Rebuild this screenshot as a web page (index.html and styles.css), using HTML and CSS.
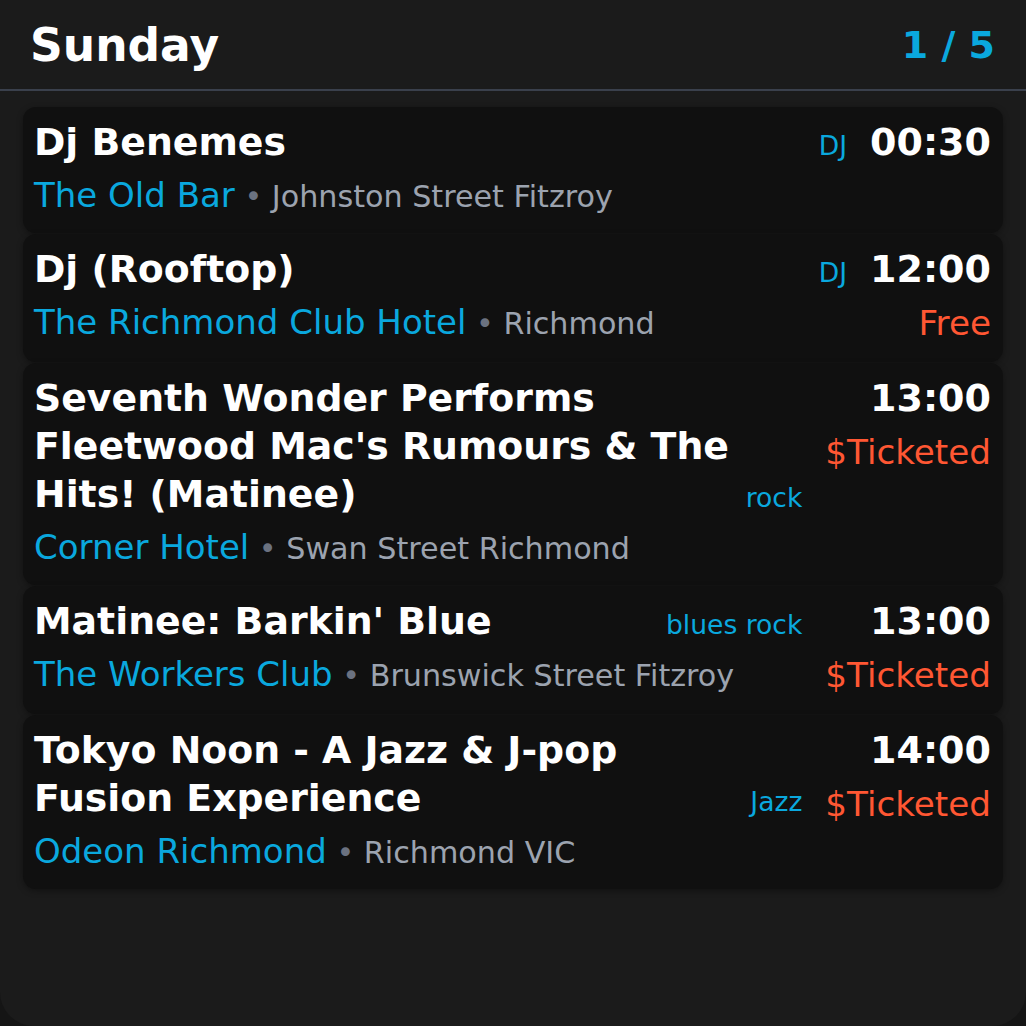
FILE: index.html
```html
<!DOCTYPE html>
<html>
<head>
<meta charset="utf-8">
<link rel="stylesheet" href="styles.css">
</head>
<body>
<div class="screen">
  <header class="header">
    <h1 class="day">Sunday</h1>
    <div class="pager">1 / 5</div>
  </header>
  <div class="list">
    <div class="card">
      <div class="main">
        <div class="title-row"><div class="title">Dj Benemes</div><div class="tag">DJ</div></div>
        <div class="venue-row"><span class="venue">The Old Bar</span><span class="addr"><span class="dot"> • </span>Johnston Street Fitzroy</span></div>
      </div>
      <div class="side"><div class="time">00:30</div></div>
    </div>
    <div class="card">
      <div class="main">
        <div class="title-row"><div class="title">Dj (Rooftop)</div><div class="tag">DJ</div></div>
        <div class="venue-row"><span class="venue">The Richmond Club Hotel</span><span class="addr"><span class="dot"> • </span>Richmond</span></div>
      </div>
      <div class="side"><div class="time">12:00</div><div class="price">Free</div></div>
    </div>
    <div class="card">
      <div class="main">
        <div class="title-row"><div class="title">Seventh Wonder Performs Fleetwood Mac's Rumours &amp; The Hits! (Matinee)</div><div class="tag">rock</div></div>
        <div class="venue-row"><span class="venue">Corner Hotel</span><span class="addr"><span class="dot"> • </span>Swan Street Richmond</span></div>
      </div>
      <div class="side"><div class="time">13:00</div><div class="price">$Ticketed</div></div>
    </div>
    <div class="card">
      <div class="main">
        <div class="title-row"><div class="title">Matinee: Barkin' Blue</div><div class="tag">blues rock</div></div>
        <div class="venue-row"><span class="venue">The Workers Club</span><span class="addr"><span class="dot"> • </span>Brunswick Street Fitzroy</span></div>
      </div>
      <div class="side"><div class="time">13:00</div><div class="price">$Ticketed</div></div>
    </div>
    <div class="card">
      <div class="main">
        <div class="title-row"><div class="title">Tokyo Noon - A Jazz &amp; J-pop Fusion Experience</div><div class="tag">Jazz</div></div>
        <div class="venue-row"><span class="venue">Odeon Richmond</span><span class="addr"><span class="dot"> • </span>Richmond VIC</span></div>
      </div>
      <div class="side"><div class="time">14:00</div><div class="price">$Ticketed</div></div>
    </div>
  </div>
</div>
</body>
</html>
```
FILE: styles.css
```css
html, body {
  margin: 0;
  padding: 0;
  background: #151515;
}
body {
  font-family: "DejaVu Sans", sans-serif;
  width: 1026px;
  height: 1026px;
  overflow: hidden;
}
.screen {
  width: 1026px;
  height: 1026px;
  background: #1b1b1b;
  border-radius: 0 0 34px 34px;
  box-sizing: border-box;
}
.header {
  height: 91px;
  border-bottom: 2px solid #3a404c;
  display: flex;
  align-items: center;
  justify-content: space-between;
  padding: 0 31px 0 30px;
  box-sizing: border-box;
}
.day {
  margin: 0;
  font-size: 45.5px;
  font-weight: bold;
  color: #ffffff;
  line-height: 1;
  padding-top: 2px;
}
.pager {
  font-size: 38px;
  font-weight: bold;
  color: #0aa8de;
  line-height: 1;
}
.list {
  padding: 16px 23px 0;
  display: flex;
  flex-direction: column;
  gap: 1px;
}
.card {
  background: #101010;
  border-radius: 13px;
  padding: 11px 12px 11px 11px;
  display: flex;
  align-items: flex-start;
  gap: 23px;
  box-shadow: 0 2px 6px rgba(0,0,0,0.35);
}
.main {
  flex: 1;
  min-width: 0;
}
.title-row {
  display: flex;
  align-items: last baseline;
  gap: 10px;
}
.title {
  flex: 1;
  font-size: 37.8px;
  font-weight: bold;
  line-height: 48px;
  color: #ffffff;
}
.tag {
  font-size: 26.6px;
  color: #0aa8de;
  white-space: nowrap;
}
.venue-row {
  margin-top: 2px;
  font-size: 34px;
  line-height: 54px;
  white-space: nowrap;
}
.venue {
  color: #0aa8de;
}
.addr {
  font-size: 30.2px;
  line-height: 1;
  color: #9ca3af;
}
.dot {
  color: #6b7280;
}
.side {
  display: flex;
  flex-direction: column;
  align-items: flex-end;
}
.time {
  font-size: 38px;
  font-weight: bold;
  line-height: 48px;
  color: #ffffff;
}
.price {
  font-size: 34.2px;
  line-height: 56px;
  margin-top: 2px;
  color: #ff5733;
}
```
